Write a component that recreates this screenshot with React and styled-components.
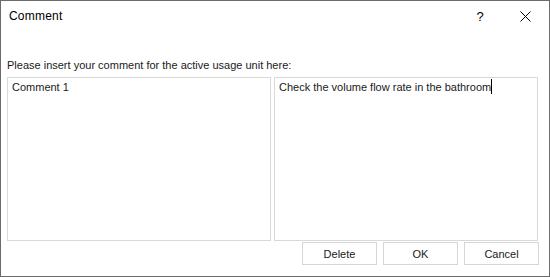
import React from "react";
import styled, { createGlobalStyle } from "styled-components";

const GlobalStyle = createGlobalStyle`
  html, body {
    margin: 0;
    padding: 0;
    background: #ffffff;
  }
  body {
    font-family: "Liberation Sans", Arial, sans-serif;
  }
`;

const Window = styled.div`
  box-sizing: border-box;
  width: 550px;
  height: 277px;
  border: 1px solid #6b6b6b;
  background: #ffffff;
  display: flex;
  flex-direction: column;
  color: #000000;
  font-size: 11px;
`;

const TitleBar = styled.div`
  display: flex;
  align-items: center;
  height: 30px;
  padding-left: 8px;
  padding-right: 5px;
`;

const Title = styled.span`
  flex: 1;
  font-size: 12px;
  letter-spacing: 0.2px;
`;

const TitleButton = styled.button`
  width: 38px;
  height: 30px;
  border: none;
  background: transparent;
  padding: 0;
  display: flex;
  align-items: center;
  justify-content: center;
  color: #000;
  font-family: inherit;
  font-size: 13px;
  margin-left: ${(p) => p.$gap || 0}px;
`;

const Body = styled.div`
  flex: 1;
  display: flex;
  flex-direction: column;
  padding: 26px 10px 0 6px;
`;

const Prompt = styled.div`
  line-height: 16px;
  margin-bottom: 4px;
  color: #1a1a1a;
`;

const Panels = styled.div`
  display: grid;
  grid-template-columns: 264px 264px;
  gap: 3px;
  height: 164px;
`;

const TextPanel = styled.div`
  box-sizing: border-box;
  border: 1px solid #d9d9d9;
  padding: 1px 4px;
  line-height: 16px;
  color: #1a1a1a;
  white-space: nowrap;
`;

const Caret = styled.span`
  display: inline-block;
  width: 1px;
  height: 15px;
  background: #000;
  vertical-align: -3px;
`;

const Footer = styled.div`
  display: flex;
  justify-content: flex-end;
  gap: 6px;
  margin-top: 1px;
`;

const DialogButton = styled.button`
  box-sizing: border-box;
  width: 75px;
  height: 23px;
  border: 1px solid #d6d6d6;
  background: #ffffff;
  font-family: inherit;
  font-size: 11px;
  color: #1a1a1a;
  padding: 0;
`;

function CloseIcon() {
  return (
    <svg width="11" height="11" viewBox="0 0 11 11">
      <path d="M0.5 0.5 L10.5 10.5 M10.5 0.5 L0.5 10.5" stroke="#000" strokeWidth="1" fill="none" />
    </svg>
  );
}

export default function App() {
  return (
    <>
      <GlobalStyle />
      <Window>
        <TitleBar>
          <Title>Comment</Title>
          <TitleButton>?</TitleButton>
          <TitleButton $gap={7}>
            <CloseIcon />
          </TitleButton>
        </TitleBar>
        <Body>
          <Prompt>Please insert your comment for the active usage unit here:</Prompt>
          <Panels>
            <TextPanel>Comment 1</TextPanel>
            <TextPanel>
              Check the volume flow rate in the bathroom
              <Caret />
            </TextPanel>
          </Panels>
          <Footer>
            <DialogButton>Delete</DialogButton>
            <DialogButton>OK</DialogButton>
            <DialogButton>Cancel</DialogButton>
          </Footer>
        </Body>
      </Window>
    </>
  );
}
